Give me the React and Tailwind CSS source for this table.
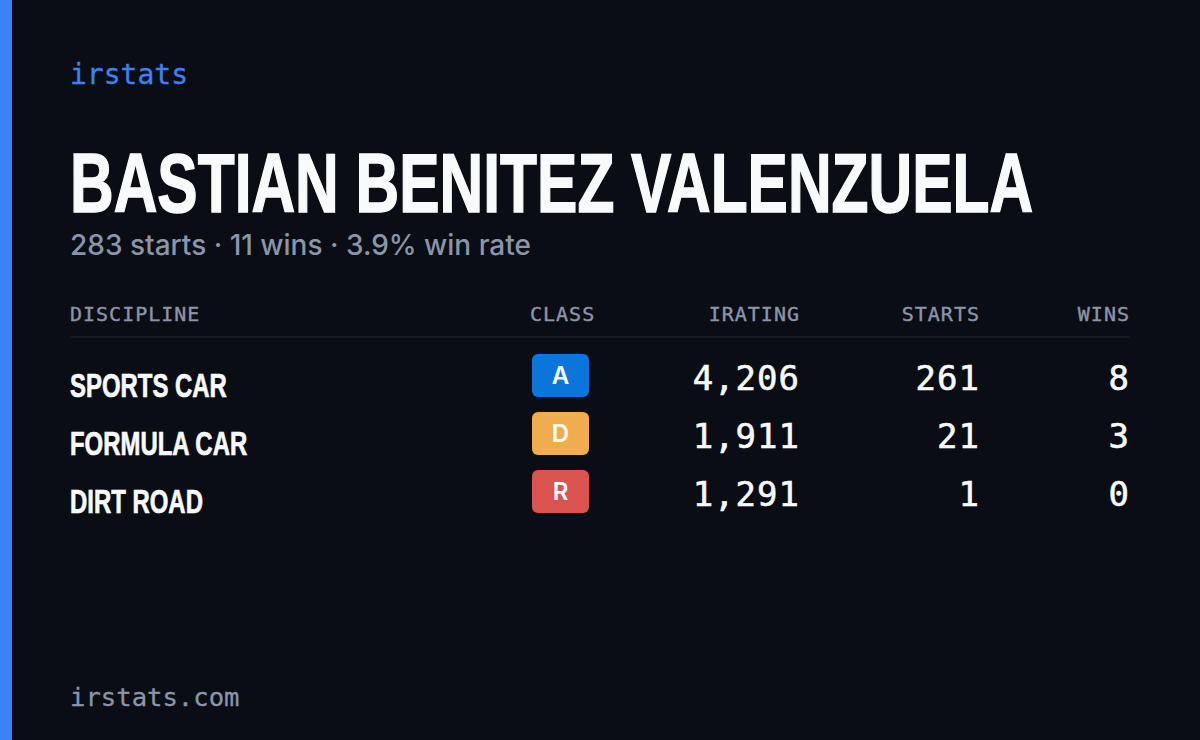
const rows = [
  { name: "SPORTS CAR", cls: "A", badge: "bg-[#0b75d9]", irating: "4,206", starts: "261", wins: "8" },
  { name: "FORMULA CAR", cls: "D", badge: "bg-[#efad4f]", irating: "1,911", starts: "21", wins: "3" },
  { name: "DIRT ROAD", cls: "R", badge: "bg-[#d9534f]", irating: "1,291", starts: "1", wins: "0" },
];

const mono = "font-['DejaVu_Sans_Mono','Liberation_Mono',monospace]";
const narrow = "font-['Liberation_Sans_Narrow','Liberation_Sans',sans-serif]";
const cols = "grid grid-cols-[460px_61px_209px_180px_150px]";
const num = `${mono} pt-[3px] text-right text-[34px] leading-[43px] tracking-[1px] text-[#f8fafc] [-webkit-text-stroke:0.6px_#f8fafc]`;

export default function App() {
  return (
    <div className="flex h-[740px] w-[1200px] bg-[#0a0d14] overflow-hidden">
      <div className="w-3 shrink-0 bg-[#3b82f6]" />
      <div className="flex min-w-0 flex-1 flex-col pl-[58px] pr-[70px] pt-[61px] pb-[29px]">
        <div className={`${mono} text-[28px] leading-none text-[#3b82f6] [-webkit-text-stroke:0.3px_#3b82f6]`}>irstats</div>

        <h1 className={`${narrow} mt-[52px] h-[84px] whitespace-nowrap text-[84px] font-bold leading-none text-[#f8fafc] [-webkit-text-stroke:1.5px_#f8fafc]`}>
          <span className="inline-block origin-left scale-x-[0.72]">BASTIAN BENITEZ VALENZUELA</span>
        </h1>
        <p className="mt-[6px] font-['Inter',sans-serif] text-[28px] font-medium leading-none text-[#8a95aa]">
          283 starts · 11 wins · 3.9% win rate
        </p>

        <div className={`${cols} ${mono} mt-[45px] border-b-2 border-[#161a24] pb-3 text-[20px] leading-none tracking-[1px] text-[#8a95aa] [-webkit-text-stroke:0.4px_#8a95aa]`}>
          <div>DISCIPLINE</div>
          <div className="text-center">CLASS</div>
          <div className="text-right">IRATING</div>
          <div className="text-right">STARTS</div>
          <div className="text-right">WINS</div>
        </div>

        <div className="mt-4 flex flex-col gap-[15px]">
          {rows.map((r) => (
            <div key={r.name} className={`${cols} h-[43px] items-start`}>
              <div className={`${narrow} whitespace-nowrap pt-[10px] text-[33px] font-bold leading-[43px] text-[#f8fafc] [-webkit-text-stroke:0.7px_#f8fafc]`}>
                <span className="inline-block origin-left scale-x-[0.725]">{r.name}</span>
              </div>
              <div className="flex justify-center">
                <span className={`${r.badge} flex h-[43px] w-[57px] items-center justify-center rounded-[6px] font-['Inter',sans-serif] text-[24px] font-semibold text-white`}>
                  {r.cls}
                </span>
              </div>
              <div className={num}>{r.irating}</div>
              <div className={num}>{r.starts}</div>
              <div className={num}>{r.wins}</div>
            </div>
          ))}
        </div>

        <div className={`${mono} mt-auto text-[25.6px] leading-none text-[#8a95aa] [-webkit-text-stroke:0.3px_#8a95aa]`}>irstats.com</div>
      </div>
    </div>
  );
}
